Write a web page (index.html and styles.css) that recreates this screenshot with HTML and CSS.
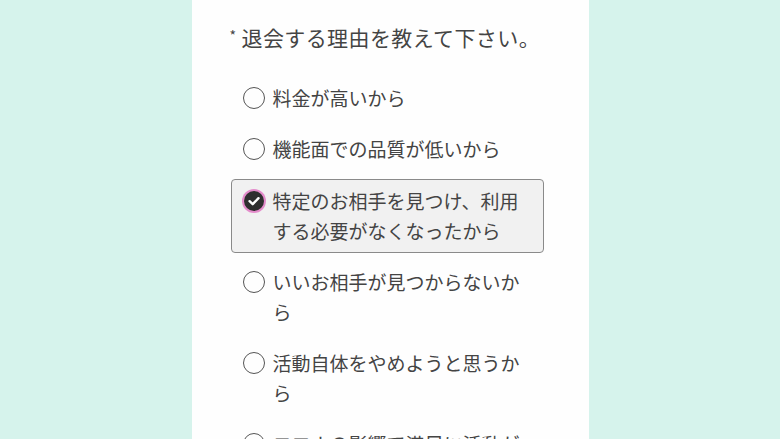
FILE: index.html
```html
<!DOCTYPE html>
<html lang="ja">
<head>
<meta charset="utf-8">
<link rel="stylesheet" href="styles.css">
</head>
<body>
<main class="panel">
  <h1 class="title"><span class="req">*</span><span class="title-text">退会する理由を教えて下さい。</span></h1>
  <ul class="options">
    <li class="option"><span class="radio"></span><span class="label">料金が高いから</span></li>
    <li class="option"><span class="radio"></span><span class="label">機能面での品質が低いから</span></li>
    <li class="option selected"><span class="radio checked"><svg viewBox="0 0 20 20" width="20" height="20"><path d="M5.6 10.2 L8.7 13.2 L14.5 7.2" fill="none" stroke="#fff" stroke-width="2.4" stroke-linecap="round" stroke-linejoin="round"/></svg></span><span class="label">特定のお相手を見つけ、利用する必要がなくなったから</span></li>
    <li class="option"><span class="radio"></span><span class="label">いいお相手が見つからないから</span></li>
    <li class="option"><span class="radio"></span><span class="label">活動自体をやめようと思うから</span></li>
    <li class="option"><span class="radio"></span><span class="label">コロナの影響で満足に活動ができないから</span></li>
  </ul>
</main>
</body>
</html>
```
FILE: styles.css
```css
html, body {
  margin: 0;
  padding: 0;
  height: 100%;
  overflow: hidden;
}
body {
  background: #d6f3ec;
  font-family: "Noto Sans CJK JP", "Noto Sans", sans-serif;
  color: #444;
}
.panel {
  width: 397px;
  height: 100%;
  margin: 0 auto;
  background: #fefefe;
  box-sizing: border-box;
  padding: 22px 45px 0 38px;
}
.title {
  margin: 0;
  display: flex;
  align-items: center;
  height: 30px;
  font-size: 21px;
  font-weight: 400;
  line-height: 30px;
  letter-spacing: 0.4px;
  color: #444;
}
.req {
  font-size: 14px;
  line-height: 14px;
  position: relative;
  top: -2px;
  width: 12px;
  flex: none;
}
.options {
  list-style: none;
  margin: 24px 0 0 1px;
  padding: 0;
  display: flex;
  flex-direction: column;
  gap: 7px;
}
.option {
  display: flex;
  gap: 8px;
  align-items: flex-start;
  padding: 6px 12px 6px 11px;
  border: 1px solid transparent;
  border-radius: 4px;
  font-size: 19px;
  line-height: 30px;
}
.option.selected {
  background: #f1f1f1;
  border-color: #8a8a8a;
  margin-top: 1px;
}
.radio {
  flex: none;
  width: 22px;
  height: 22px;
  margin-top: 4px;
  box-sizing: border-box;
  border: 1.8px solid #555;
  border-radius: 50%;
  display: flex;
  align-items: center;
  justify-content: center;
}
.radio.checked {
  background: #2f2f2f;
  border: none;
  box-shadow: 0 0 0 2px #e48ccb;
  width: 20px;
  height: 20px;
  margin: 5px 1px 0 1px;
}
.radio svg {
  display: block;
}
.label {
  width: 260px;
}
```
